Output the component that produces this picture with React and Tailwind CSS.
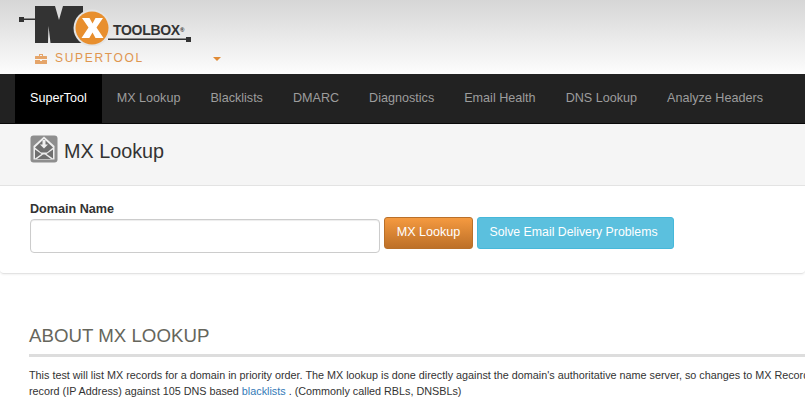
const font = { fontFamily: '"Liberation Sans", Arial, sans-serif' };

const links = ['MX Lookup', 'Blacklists', 'DMARC', 'Diagnostics', 'Email Health', 'DNS Lookup', 'Analyze Headers'];

function Logo() {
  return (
    <div className="relative h-[46px] w-[200px]">
      <svg className="absolute left-0 top-0" width="200" height="46" viewBox="0 0 200 46">
        <rect x="19" y="17" width="5" height="5" fill="#333" />
        <rect x="24" y="18.500" width="11" height="1.500" fill="#333" />
        <path d="M35 6h20l4 14 4-14h20v37H50.500l-2-17-.5 17H35z" fill="#333" />
        <rect x="108" y="38.500" width="79" height="1.500" fill="#333" />
        <rect x="186" y="37" width="5" height="5" fill="#333" />
        <circle cx="92" cy="28" r="18.500" fill="#e4e4e4" />
        <circle cx="92" cy="28" r="16.500" fill="#e88f2e" />
        <path d="M82 18h7.500l3 5.500 3-5.500h7.500l-6.500 9.500 7 10.500h-8l-3-5.500-3.200 5.500h-7.800l7-10.500z" fill="#fff" />
      </svg>
      <span className="absolute left-[113px] top-[22px] text-[14px] font-bold leading-[16px] tracking-[-0.3px] text-[#333]">
        TOOLBOX
        <sup className="text-[6px]">®</sup>
      </span>
    </div>
  );
}

function MailIcon() {
  return (
    <svg width="28" height="29" viewBox="0 0 28 29">
      <rect x="0.500" y="1.500" width="27" height="27" rx="3" fill="#8e8e8e" />
      <path d="M3.500 12 14 2.500 24.500 12v13.500h-21z" fill="#eee" />
      <path d="M5 13.500 14 5l9 8.500-6 5h-6z" fill="#6f6f6f" />
      <path d="M12.500 6h3v4.500h2.500L14 14.500 10 10.500h2.500z" fill="#eee" />
      <path d="M5 15.500 11.500 20 5 24.500zM23 15.500 16.500 20 23 24.500zM7 25l6-4.500h2l6 4.500z" fill="#6f6f6f" />
    </svg>
  );
}

export default function App() {
  return (
    <div className="h-[407px] w-[805px] overflow-hidden bg-white text-[#333]" style={font}>
      {/* Top header */}
      <header className="h-[74px] bg-gradient-to-b from-[#d6d6d6] to-[#fdfdfd]">
        <Logo />
        <div className="ml-[35px] mt-[3px] flex items-center">
          <svg width="12" height="11" viewBox="0 0 12 11">
            <path d="M4 3V1h4v2h3.500a.5.5 0 0 1 .5.500V6H0V3.500A.5.5 0 0 1 .5 3zM5 2v1h2V2zM0 7h5v1h2V7h5v3.500a.5.5 0 0 1-.5.500H.5a.5.5 0 0 1-.5-.500z" fill="#e5a56a" />
          </svg>
          <span className="ml-[8px] text-[12px] tracking-[1.700px] text-[#df9650]">SUPERTOOL</span>
          <span className="ml-[69px] mt-[1px] h-0 w-0 border-x-[4px] border-t-[4px] border-x-transparent border-t-[#e08a35]" />
        </div>
      </header>

      {/* Main nav */}
      <nav className="flex h-[50px] items-stretch border-b border-[#080808] bg-[#222] pl-[15px] text-[12.600px]">
        <a className="flex items-center bg-black px-[15px] text-white">SuperTool</a>
        {links.map((l) => (
          <a key={l} className="flex items-center px-[15px] text-[#9d9d9d]">{l}</a>
        ))}
      </nav>

      {/* Page title */}
      <div className="flex h-[62px] items-start border-b border-[#e3e3e3] bg-[#f5f5f5] pl-[30px] pt-[10px]">
        <MailIcon />
        <h1 className="ml-[6px] mt-[5px] text-[19.800px] leading-[24px] text-[#333]">MX Lookup</h1>
      </div>

      {/* Form */}
      <div className="h-[88px] rounded-b-[4px] border-b border-[#e3e3e3] pl-[30px] pt-[15px] shadow-[0_1px_2px_rgba(0,0,0,0.05)]">
        <label className="block text-[12.600px] font-bold leading-[16px]">Domain Name</label>
        <div className="flex items-start">
          <input className="mt-[2px] h-[34px] w-[350px] rounded-[4px] border border-[#ccc] bg-white shadow-[inset_0_1px_1px_rgba(0,0,0,0.075)]" />
          <button className="ml-[4px] h-[32px] w-[89px] rounded-[3px] border border-[#b9702a] bg-gradient-to-b from-[#f59a40] to-[#bd7028] pb-[2px] text-[12.600px] text-[#fff]">
            MX Lookup
          </button>
          <button className="ml-[4px] h-[32px] w-[197px] rounded-[3px] border border-[#46b8da] bg-[#5bc0de] pb-[2px] pr-[4px] text-[12.300px] text-white">
            Solve Email Delivery Problems
          </button>
        </div>
      </div>

      {/* About */}
      <section className="pl-[29px] pt-[51px]">
        <h2 className="border-b-[3px] border-[#ddd] pb-[7px] text-[18.700px] leading-[22px] text-[#66665c]">ABOUT MX LOOKUP</h2>
        <p className="mt-[10px] w-[900px] whitespace-nowrap text-[10.800px] leading-[16px] text-[#333]">
          This test will list MX records for a domain in priority order. The MX lookup is done directly against the domain's authoritative name server, so changes to MX Records should show up instantly.
          <br />
          record (IP Address) against 105 DNS based <a className="text-[#337ab7]">blacklists</a> . (Commonly called RBLs, DNSBLs)
        </p>
      </section>
    </div>
  );
}
